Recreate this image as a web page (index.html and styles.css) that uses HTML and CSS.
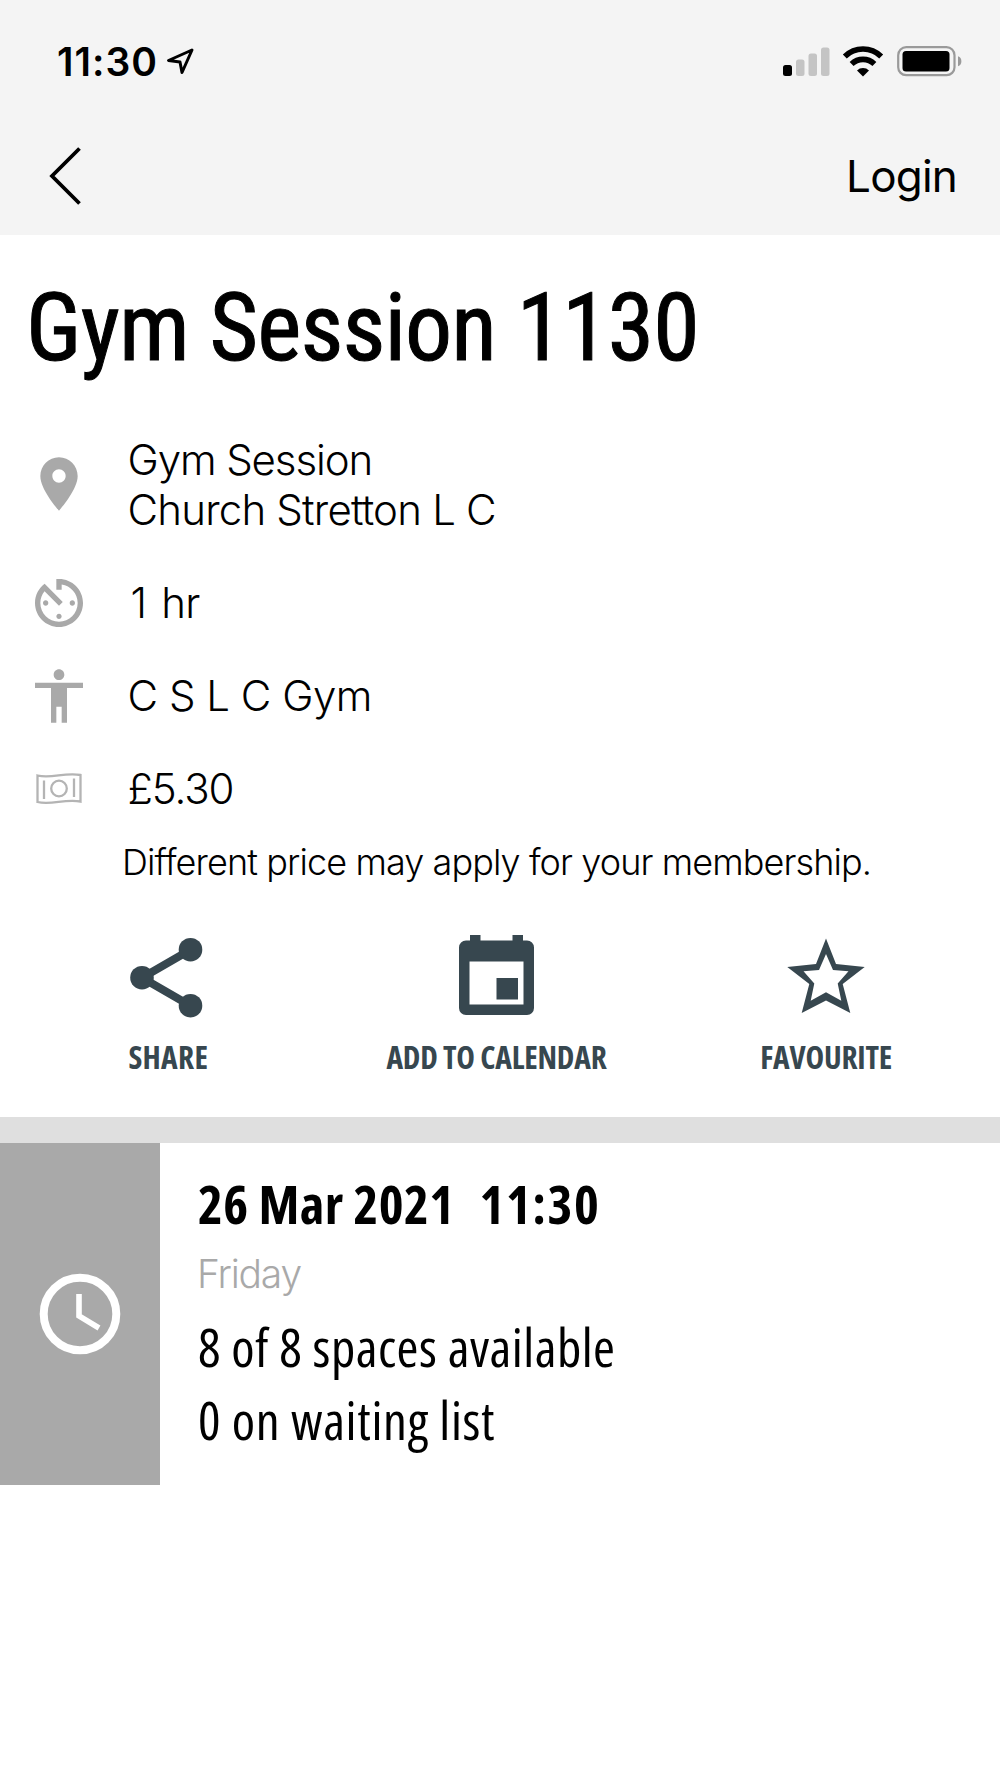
FILE: index.html
```html
<!DOCTYPE html>
<html lang="en">
<head>
<meta charset="UTF-8">
<meta name="viewport" content="width=device-width, initial-scale=1.0">
<title>Gym Session 1130</title>
<link rel="stylesheet" href="styles.css">
</head>
<body>
<header class="header">
  <div class="status-bar">
    <div class="status-left">
      <span class="status-time">11:30</span>
      <svg class="location" width="29" height="29" viewBox="0 0 29 29">
        <path d="M26 3L2.5 13.5l11.5 1.5 2 10.5z" fill="none" stroke="#000" stroke-width="3" stroke-linejoin="round"/>
      </svg>
    </div>
    <div class="status-right">
      <svg width="47" height="30" viewBox="0 0 47 30">
        <rect x="0" y="18" width="9" height="11" rx="2.5" fill="#000"/>
        <rect x="13" y="12.5" width="8.5" height="16.5" rx="2.5" fill="#c4c4c4"/>
        <rect x="25.5" y="6.5" width="8.5" height="22.5" rx="2.5" fill="#c4c4c4"/>
        <rect x="38" y="0.5" width="8.5" height="28.5" rx="2.5" fill="#c4c4c4"/>
      </svg>
      <svg class="wifi" width="40" height="30" viewBox="0 0 40 30">
        <path d="M1.8 9.5a26 26 0 0 1 36.4 0" fill="none" stroke="#000" stroke-width="5.6"/>
        <path d="M8.6 17a16.4 16.4 0 0 1 22.8 0" fill="none" stroke="#000" stroke-width="5.6"/>
        <path d="M20 29.5l-6-6a8.6 8.6 0 0 1 12 0z" fill="#000"/>
      </svg>
      <svg class="battery" width="65" height="31" viewBox="0 0 65 31">
        <rect x="1.2" y="1.2" width="56.3" height="28" rx="8" fill="none" stroke="#9a9a9a" stroke-width="2.2"/>
        <rect x="5.5" y="5" width="47" height="20.5" rx="3.5" fill="#000"/>
        <path d="M61 10.2c4.5 1 4.5 9 0 10z" fill="#9a9a9a"/>
      </svg>
    </div>
  </div>
  <nav class="nav">
    <svg class="back" width="36" height="62" viewBox="0 0 36 62">
      <path d="M31.5 3.5L4 31l27.5 27.5" fill="none" stroke="#000" stroke-width="3.8"/>
    </svg>
    <a class="login">Login</a>
  </nav>
</header>

<main>
  <h1 class="title">Gym Session 1130</h1>

  <div class="details">
    <div class="detail">
      <svg class="icon pin" viewBox="0 0 24 24"><path d="M12 2C8.13 2 5 5.13 5 9c0 5.25 7 13 7 13s7-7.75 7-13c0-3.87-3.13-7-7-7zm0 9.5c-1.38 0-2.5-1.12-2.5-2.5s1.12-2.5 2.5-2.5 2.5 1.12 2.5 2.5-1.12 2.5-2.5 2.5z"/></svg>
      <div><span>Gym Session</span><br><span class="centre">Church Stretton L C</span></div>
    </div>
    <div class="detail">
      <svg class="icon" viewBox="0 0 24 24"><path d="M11 17c0 .55.45 1 1 1s1-.45 1-1-.45-1-1-1-1 .45-1 1zm0-14v4h2V5.08c3.39.49 6 3.39 6 6.92 0 3.87-3.13 7-7 7s-7-3.13-7-7c0-1.68.59-3.22 1.58-4.42L12 13l1.41-1.41-6.8-6.8v.02C4.42 6.45 3 9.05 3 12c0 4.97 4.02 9 9 9 4.97 0 9-4.03 9-9s-4.03-9-9-9h-1zm7 9c0-.55-.45-1-1-1s-1 .45-1 1 .45 1 1 1 1-.45 1-1zM6 12c0 .55.45 1 1 1s1-.45 1-1-.45-1-1-1-1 .45-1 1z"/></svg>
      <span class="duration">1 hr</span>
    </div>
    <div class="detail">
      <svg class="icon" viewBox="0 0 24 24"><path d="M12 2c1.1 0 2 .9 2 2s-.9 2-2 2-2-.9-2-2 .9-2 2-2zm9 7h-6v13h-2v-6h-2v6H9V9H3V7h18v2z"/></svg>
      <span class="room">C S L C Gym</span>
    </div>
    <div class="detail">
      <svg class="icon money" viewBox="0 0 64 64">
        <path d="M10.5 18.5c14 3.5 27-3.5 43-.5v26.5c-16-3-29 4-43 .5zM17 23.5V42M47 21.5V40"/>
        <circle cx="32" cy="31.5" r="7.8"/>
      </svg>
      <span>£5.30</span>
    </div>
  </div>
  <p class="note">Different price may apply for your membership.</p>

  <div class="actions">
    <div class="action">
      <svg width="75" height="81" viewBox="0 0 75 81">
        <path d="M61.5 14.7L13 42.7l48.5 28" fill="none" stroke="#37474f" stroke-width="8"/>
        <circle cx="61.5" cy="14.7" r="11.8"/>
        <circle cx="13" cy="42.7" r="11.8"/>
        <circle cx="61.5" cy="70.7" r="11.8"/>
      </svg>
      <span class="label share">SHARE</span>
    </div>
    <div class="action">
      <svg width="75" height="81" viewBox="0 0 75 81">
        <path fill-rule="evenodd" d="M11 0h10.5v5.5h32V0H64v5.5h4a7 7 0 0 1 7 7V73a7 7 0 0 1-7 7H7a7 7 0 0 1-7-7V12.5a7 7 0 0 1 7-7h4zM10.5 26.5v43h54v-43zM37.5 43H59v21.5H37.5z"/>
      </svg>
      <span class="label">ADD TO CALENDAR</span>
    </div>
    <div class="action">
      <svg width="78" height="81" viewBox="0 0 78 81">
        <path fill-rule="evenodd" d="M39 3.5l10 25.5 28.7 3-22 17 7.6 29L39 65.5 14.7 78l7.6-29-22-17L29 29zM39 19l-7 16-15.5 1.2L27.3 48.5l-3.6 17.2L39 57.2l15.3 8.5-3.6-17.2L61.5 36.2 46 35z"/>
      </svg>
      <span class="label">FAVOURITE</span>
    </div>
  </div>

  <section class="session">
    <div class="session-side">
      <svg width="82" height="82" viewBox="0 0 82 82" fill="none" stroke="#fff">
        <circle cx="41" cy="41" r="36.3" stroke-width="8"/>
        <path d="M40 21v22l20 12" stroke-width="5.6"/>
      </svg>
    </div>
    <div class="session-info">
      <div class="session-date"><span class="date">26 Mar 2021</span><span class="time">11:30</span></div>
      <div class="session-day">Friday</div>
      <div class="session-line spaces">8 of 8 spaces available</div>
      <div class="session-line waiting">0 on waiting list</div>
    </div>
  </section>
</main>
</body>
</html>
```

FILE: styles.css
```css
body {
  margin: 0;
  background-color: #fff;
  color: #000;
  font-family: Inter, "Liberation Sans", sans-serif;
}
svg {
  overflow: visible;
}
.header {
  height: 235px;
  background-color: #f4f4f4;
}
.status-bar {
  display: flex;
  justify-content: space-between;
  align-items: center;
  height: 123px;
  padding: 0 38px 0 57px;
}
.status-left,
.status-right {
  display: flex;
  align-items: center;
}
.status-time {
  font-size: 39px;
  font-weight: 600;
  letter-spacing: 1px;
}
.location {
  margin-left: 8px;
}
.wifi {
  margin-left: 13px;
}
.battery {
  margin-left: 14px;
}
.nav {
  display: flex;
  justify-content: space-between;
  align-items: center;
  height: 106px;
  padding: 0 43px 0 48px;
}
.login {
  font-size: 44px;
  letter-spacing: -0.8px;
}
.title {
  margin: 38px 0 52px 26px;
  font-family: "Roboto Condensed", Roboto, sans-serif;
  font-size: 94px;
  font-weight: 400;
  line-height: 110px;
  letter-spacing: -0.9px;
  -webkit-text-stroke: 1px #000;
}
.details {
  display: flex;
  flex-direction: column;
  gap: 43px;
  padding-left: 27px;
}
.detail {
  display: flex;
  align-items: center;
  gap: 36.5px;
  font-size: 42px;
  font-weight: 300;
  line-height: 50px;
  letter-spacing: -1.1px;
}
.icon {
  width: 64px;
  height: 64px;
  margin: -7px 0;
  fill: #a9a9a9;
}
.pin {
  margin: -9px 0 -6px;
}
.money {
  fill: none;
  stroke: #b4b4b4;
  stroke-width: 2.3;
}
.centre {
  letter-spacing: -0.8px;
}
.duration {
  padding-left: 3px;
  letter-spacing: -0.8px;
  word-spacing: 4px;
}
.room {
  letter-spacing: -0.5px;
}
.note {
  margin: 28px 0 0 122px;
  font-size: 36px;
  font-weight: 300;
  line-height: 40px;
  letter-spacing: -0.9px;
}
.actions {
  display: grid;
  grid-template-columns: repeat(3, 1fr);
  padding: 53px 9px 40px 2px;
  color: #37474f;
  fill: #37474f;
}
.action {
  display: flex;
  flex-direction: column;
  align-items: center;
  gap: 21px;
}
.label {
  font-family: "Open Sans", sans-serif;
  font-size: 31.5px;
  font-stretch: 75%;
  font-weight: 700;
  line-height: 40px;
  letter-spacing: -0.2px;
}
.share {
  padding-left: 3px;
  letter-spacing: 0.3px;
}
.session {
  display: flex;
  height: 342px;
  border-top: 26px solid #dfdfdf;
}
.session-side {
  display: flex;
  justify-content: center;
  align-items: center;
  width: 160px;
  background-color: #a9a9a9;
}
.session-info {
  padding: 29px 0 0 38px;
  font-family: "Open Sans", sans-serif;
  font-stretch: 75%;
  font-size: 53px;
}
.session-date {
  display: flex;
  gap: 25px;
  font-weight: 700;
  line-height: 64px;
}
.date {
  letter-spacing: 0.4px;
}
.time {
  letter-spacing: 1.5px;
}
.session-day {
  margin: 13px 0 12px -1px;
  color: #a9a9a9;
  font-family: Inter, sans-serif;
  font-size: 39px;
  font-weight: 300;
  line-height: 50px;
  letter-spacing: -1.2px;
}
.session-line {
  line-height: 72.5px;
}
.spaces {
  letter-spacing: 0.5px;
}
.waiting {
  letter-spacing: 0.7px;
}
```
